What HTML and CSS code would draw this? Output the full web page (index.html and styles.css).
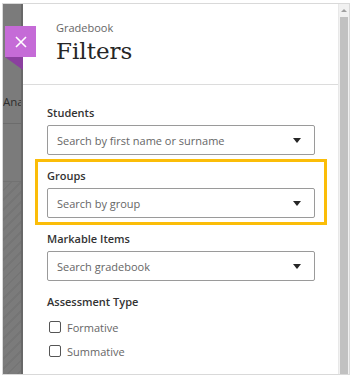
FILE: index.html
```html
<!DOCTYPE html>
<html lang="en">
<head>
    <meta charset="UTF-8">
    <meta name="viewport" content="width=device-width, initial-scale=1.0">
    <title>Filters</title>
    <link rel="stylesheet" href="styles.css">
</head>
<body>

    <div class="frame">
        <div class="backdrop">
            <div class="backdrop-top"></div>
            <div class="backdrop-row">Ana</div>
            <div class="backdrop-blank"></div>
            <div class="backdrop-hatch"></div>
        </div>

        <div class="panel">
            <div class="panel-header">
                <div class="eyebrow">Gradebook</div>
                <h1>Filters</h1>
            </div>

            <form class="filters">
                <div class="field">
                    <label>Students</label>
                    <div class="select">
                        <span>Search by first name or surname</span>
                        <span class="caret"></span>
                    </div>
                </div>

                <div class="field highlight">
                    <label>Groups</label>
                    <div class="select">
                        <span>Search by group</span>
                        <span class="caret"></span>
                    </div>
                </div>

                <div class="field items">
                    <label>Markable Items</label>
                    <div class="select">
                        <span>Search gradebook</span>
                        <span class="caret"></span>
                    </div>
                </div>

                <div class="field">
                    <label>Assessment Type</label>
                    <div class="checks">
                        <div class="check-row"><span class="box"></span>Formative</div>
                        <div class="check-row"><span class="box"></span>Summative</div>
                    </div>
                </div>
            </form>
        </div>

        <div class="scrollbar">
            <div class="scroll-up"></div>
            <div class="scroll-thumb"></div>
        </div>

        <!-- close button sits over the backdrop edge -->
        <button type="button" class="close">
            <svg width="12" height="12" viewBox="0 0 12 12">
                <path d="M1 1 L11 11 M11 1 L1 11" stroke="#fff" stroke-width="1.6" fill="none"/>
            </svg>
        </button>
        <div class="close-fold"></div>
    </div>

</body>
</html>
```

FILE: styles.css
```css
body {
    margin: 0;
    padding: 3px 2px 0 2px;
    background-color: #ffffff;
    font-family: "Open Sans", Arial, sans-serif;
}
.frame {
    position: relative;
    display: flex;
    width: 346px;
    height: 370px;
    border: 1px solid #d9d9d9;
    overflow: hidden;
}
.backdrop {
    width: 18px;
    display: flex;
    flex-direction: column;
    background-color: #7b7b7b;
    border-right: 2px solid #686868;
}
.backdrop-top {
    height: 86px;
}
.backdrop-row {
    height: 29px;
    padding-top: 4px;
    font-size: 11.5px;
    line-height: 16px;
    color: #2e2e2e;
    white-space: nowrap;
    overflow: hidden;
    border-bottom: 1px solid #6c6c6c;
}
.backdrop-blank {
    height: 57px;
    border-bottom: 1px solid #727272;
}
.backdrop-hatch {
    flex: 1;
    background: repeating-linear-gradient(135deg, #7b7b7b 0, #7b7b7b 5px, #757575 5px, #757575 7px);
}
.panel {
    flex: 1;
    background-color: #fff;
}
.panel-header {
    padding: 17px 24px 18px 33px;
    border-bottom: 1px solid #dcdcdc;
}
.eyebrow {
    font-size: 11px;
    line-height: 14px;
    color: #666;
}
h1 {
    margin: 2px 0 0 0;
    font-family: "DejaVu Serif", "Liberation Serif", serif;
    font-weight: normal;
    font-size: 23px;
    line-height: 29px;
    color: #262626;
}
.filters {
    padding: 20px 23px 0 24px;
}
.field label {
    display: block;
    font-size: 11px;
    font-weight: 600;
    line-height: 16px;
    color: #333;
    margin-bottom: 4px;
}
.select {
    display: flex;
    align-items: center;
    justify-content: space-between;
    height: 28px;
    padding: 0 13px 0 9px;
    border: 1px solid #9a9a9a;
    border-radius: 2px;
    font-size: 11px;
    color: #666;
}
.caret {
    width: 0;
    height: 0;
    border-left: 4px solid transparent;
    border-right: 4px solid transparent;
    border-top: 5px solid #262626;
}
.highlight {
    margin: 4px -12px 6px -12px;
    padding: 6px 9px 4px 9px;
    border: 3px solid #fbbd08;
}
.items {
    margin-bottom: 13px;
}
.checks {
    padding-top: 1px;
}
.check-row {
    display: flex;
    align-items: center;
    height: 24px;
    padding-left: 2px;
    font-size: 11px;
    color: #666;
}
.box {
    width: 10px;
    height: 10px;
    margin-right: 6px;
    border: 1.5px solid #555;
    border-radius: 2px;
}
.scrollbar {
    width: 10px;
    background-color: #f1f1f1;
    border-left: 1px solid #e8e8e8;
    display: flex;
    flex-direction: column;
    align-items: center;
}
.scroll-up {
    margin-top: 5px;
    width: 0;
    height: 0;
    border-left: 3px solid transparent;
    border-right: 3px solid transparent;
    border-bottom: 3px solid #a0a0a0;
}
.scroll-thumb {
    margin-top: 5px;
    width: 8px;
    flex: 1;
    background-color: #c1c1c1;
}
.close {
    position: absolute;
    left: 2px;
    top: 22px;
    width: 31px;
    height: 31px;
    padding: 0;
    border: none;
    background-color: #c56bd7;
    display: flex;
    align-items: center;
    justify-content: center;
    cursor: pointer;
}
.close-fold {
    position: absolute;
    left: 2px;
    top: 53px;
    width: 0;
    height: 0;
    border-top: 13px solid #8b3f9f;
    border-left: 18px solid transparent;
}
```
